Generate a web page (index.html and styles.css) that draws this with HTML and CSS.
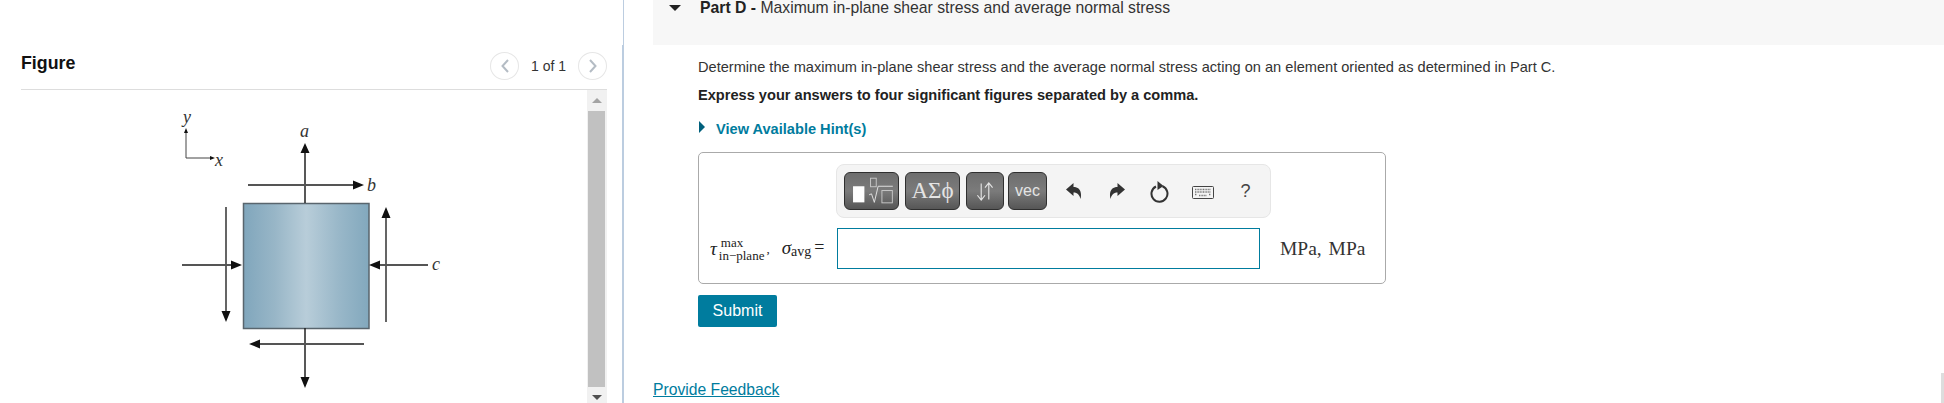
FILE: index.html
```html
<!DOCTYPE html>
<html lang="en">
<head>
<meta charset="utf-8">
<title>Part D</title>
<link rel="stylesheet" href="styles.css">
</head>
<body>
<div class="page">
  <aside class="figure-pane">
    <header class="figure-head">
      <h2 class="figure-title">Figure</h2>
      <div class="pager">
        <button class="pager-btn" type="button" aria-label="Previous"><svg viewBox="0 0 10 16" class="chev"><path d="M8 2 2.5 8 8 14"/></svg></button>
        <span class="pager-text">1 of 1</span>
        <button class="pager-btn" type="button" aria-label="Next"><svg viewBox="0 0 10 16" class="chev"><path d="M2 2 7.5 8 2 14"/></svg></button>
      </div>
    </header>
    <div class="figure-body">
      <svg class="diagram" viewBox="21 90 566 313" aria-label="Stress element">
        <defs>
          <linearGradient id="steel" x1="0" x2="1" y1="0" y2="0">
            <stop offset="0" stop-color="#80a6bc"/>
            <stop offset="0.25" stop-color="#98b6c7"/>
            <stop offset="0.5" stop-color="#b8cdd9"/>
            <stop offset="0.75" stop-color="#9ab8c9"/>
            <stop offset="1" stop-color="#82a8bd"/>
          </linearGradient>
        </defs>
        <rect class="element" x="243.5" y="203.5" width="125.5" height="125"/>
        <path class="axis" d="M186 132V158H211"/>
        <path class="head" d="M186 128l-2 5h4zM215 158l-5-2v4z"/>
        <path class="line dark" d="M305 203V150M305 328V380"/>
        <path class="line" d="M248 185H354M226 207V313M386 322V216M182 265H233M428 265H378M364 344H259"/>
        <path class="head" d="M305 143l-4.500 10h9zM364 185l-11-4.500v9zM226 322l-4.500-11h9zM386 207l-4.500 11h9zM242 265l-11-4.500v9zM369 265l11-4.500v9zM249 344l11-4.500v9zM305 388l-4.500-11h9z"/>
        <text class="label" x="300" y="137">a</text>
        <text class="label" x="367" y="191">b</text>
        <text class="label" x="432" y="270">c</text>
        <text class="label" x="183" y="123">y</text>
        <text class="label" x="215" y="166">x</text>
      </svg>
      <div class="scrollbar">
        <span class="scroll-btn"><i class="tri-up"></i></span>
        <span class="scroll-thumb"></span>
        <span class="scroll-btn"><i class="tri-down"></i></span>
      </div>
    </div>
  </aside>

  <div class="split"><span class="split-top"></span><span class="split-bottom"></span></div>

  <main class="part">
    <div class="part-head">
      <i class="part-caret"></i>
      <p class="part-title"><b>Part D - </b>Maximum in-plane shear stress and average normal stress</p>
    </div>
    <div class="part-body">
      <p class="prompt">Determine the maximum in-plane shear stress and the average normal stress acting on an element oriented as determined in Part C.</p>
      <p class="prompt strong">Express your answers to four significant figures separated by a comma.</p>
      <a class="hint" href="#"><i class="hint-caret"></i>View Available Hint(s)</a>
      <div class="answer">
        <div class="toolbar">
          <button class="tb-btn w55" type="button" aria-label="Templates">
            <svg viewBox="0 0 55 38" class="tb-svg">
              <rect class="t-fill" x="8" y="14" width="12" height="17"/>
              <rect class="t-box" x="26.500" y="5.500" width="6" height="9"/>
              <path class="t-root" d="M25 23l2.500-1 3 9 4-17H50"/>
              <rect class="t-box" x="38.500" y="18.500" width="11" height="13"/>
            </svg>
          </button>
          <button class="tb-btn w55 greek" type="button">ΑΣϕ</button>
          <button class="tb-btn w38" type="button" aria-label="Subscript superscript">
            <svg viewBox="0 0 38 38" class="tb-svg"><path class="t-arrow" d="M15 11V28M11 23.500l4 5 4-5M23 28V11M19 15.500l4-5 4 5"/></svg>
          </button>
          <button class="tb-btn w39 vec" type="button">vec</button>
          <div class="tools">
            <span class="tool"><svg viewBox="0 0 16 16" class="tool-svg"><path d="M0 6.500 7.500 0v4c5 0 9 3.500 7 12-1-4-3-6.500-7-6.500v3.500z"/></svg></span>
            <span class="tool"><svg viewBox="0 0 16 16" class="tool-svg"><path d="M16 6.500 8.500 0v4c-5 0-9 3.500-7 12 1-4 3-6.500 7-6.500v3.500z"/></svg></span>
            <span class="tool"><svg viewBox="0 0 20 22" class="tool-svg reset"><path class="ring" d="M12.500 5.300A8 8 0 1 1 6 5.500"/><path d="M7.500 0 13.500 5 7.500 9z"/></svg></span>
            <span class="tool"><svg viewBox="0 0 22 13" class="tool-svg keys"><rect class="kb" x="0.500" y="0.500" width="21" height="12" rx="1"/><path class="kb-keys" d="M3 3.500H19M3 6H19M3 8.500H5M7 9.500H15M17 8.500H19"/></svg></span>
            <span class="tool help">?</span>
          </div>
        </div>
        <div class="answer-row">
          <div class="math">
            <i class="mi">τ</i>
            <span class="stack"><span class="sup">max</span><span class="sub">in−plane</span></span>
            <span class="comma">,</span>
            <i class="mi sigma">σ</i><span class="avg">avg</span>
            <span class="eq">=</span>
          </div>
          <input class="answer-input" type="text" aria-label="Answer">
          <span class="units">MPa, MPa</span>
        </div>
      </div>
      <button class="submit" type="button">Submit</button>
    </div>
    <a class="feedback" href="#">Provide Feedback</a>
  </main>
  <span class="page-scroll"></span>
</div>
</body>
</html>
```

FILE: styles.css
```css
* { box-sizing: border-box; }
html, body { margin: 0; height: 403px; overflow: hidden; background: #fff; }
body { font-family: "Liberation Sans", Arial, sans-serif; color: #222; }
p, h2 { margin: 0; }
.page { position: relative; display: flex; height: 403px; overflow: hidden; }

/* left pane */
.figure-pane { width: 622px; flex: none; padding: 0 15px 0 21px; }
.figure-head { height: 90px; padding: 52px 0 9px; display: flex; justify-content: space-between; border-bottom: 1px solid #ddd; }
.figure-title { font-size: 17.800px; line-height: 22px; font-weight: 700; color: #111; }
.pager { display: flex; align-items: center; }
.pager-btn { width: 29px; height: 28px; padding: 0; display: flex; align-items: center; justify-content: center; background: #fff; border: 1px solid #e6e6e6; border-radius: 50%; }
.chev { width: 10px; height: 16px; fill: none; stroke: #b4bcc4; stroke-width: 2; }
.pager-text { width: 59px; text-align: center; font-size: 14px; color: #333; }
.figure-body { display: flex; height: 313px; }
.diagram { flex: 1; min-width: 0; height: 313px; display: block; }
.element { fill: url(#steel); stroke: #59656d; stroke-width: 1.5; }
.axis { fill: none; stroke: #444; stroke-width: 1; }
.line { fill: none; stroke: #555; stroke-width: 1.8; }
.line.dark { stroke: #222; stroke-width: 1.5; }
.head { fill: #111; }
.label { font-family: "Liberation Serif", serif; font-style: italic; font-size: 18px; fill: #333; }
.scrollbar { width: 20px; flex: none; display: flex; flex-direction: column; background: #f1f1f1; padding: 0 2px 0 1px; }
.scroll-btn { height: 21px; flex: none; display: flex; align-items: center; justify-content: center; }
.scroll-thumb { flex: none; height: 276px; background: #c1c1c1; }
.tri-up { width: 0; height: 0; border: 5px solid transparent; border-top: 0; border-bottom: 5px solid #a3a3a3; }
.tri-down { width: 0; height: 0; border: 5px solid transparent; border-bottom: 0; border-top: 5px solid #505050; }

.split { width: 2px; flex: none; display: flex; flex-direction: column; align-items: flex-end; }
.split-top { width: 1px; height: 45px; background: #bccde0; }
.split-bottom { width: 2px; flex: 1; background: #bccde0; }

/* right pane */
.part { flex: 1; min-width: 0; padding-left: 29px; }
.part-head { height: 45px; background: #f7f7f7; display: flex; padding-left: 16px; }
.part-caret { width: 0; height: 0; margin-top: 5px; border-style: solid; border-width: 6px 6px 0; border-color: #222 transparent transparent; }
.part-title { margin-left: 19px; font-size: 15.750px; line-height: 16px; color: #333; }
.part-title b { color: #222; }
.part-body { padding-left: 45px; }
.prompt { font-size: 14.600px; line-height: 20px; margin-top: 12px; color: #333; }
.prompt.strong { margin-top: 8px; font-weight: 700; color: #222; }
.hint { display: flex; align-items: center; margin-top: 14px; height: 20px; font-size: 14.600px; font-weight: 700; color: #007c9e; text-decoration: none; }
.hint-caret { width: 0; height: 0; margin: 0 11px 4px 1px; border-style: solid; border-width: 6px 0 6px 6px; border-color: transparent transparent transparent #00607c; }
.answer { width: 688px; height: 132px; margin-top: 13px; border: 1px solid #aaa; border-radius: 5px; padding: 11px 0 0 137px; }
.toolbar { width: 435px; height: 54px; display: flex; align-items: center; padding-left: 7px; gap: 6px; background: #f4f4f4; border: 1px solid #e6e6e6; border-radius: 8px; }
.tb-btn { height: 38px; padding: 0; flex: none; border: 1px solid #2f2f2f; border-radius: 6px; background: linear-gradient(#6e6e6e, #7b7b7b 50%, #565656); color: #e4e4e4; }
.w55 { width: 55px; }
.w38 { width: 38px; }
.w39 { width: 39px; margin-left: -2px; }
.greek { font-family: "Liberation Serif", serif; font-size: 23px; }
.vec { font-size: 16px; }
.tb-svg { display: block; width: 100%; height: 100%; }
.t-fill { fill: #fff; }
.t-box { fill: none; stroke: #c8c8c8; stroke-width: 1; }
.t-root { fill: none; stroke: #e4e4e4; stroke-width: 1; }
.t-arrow { fill: none; stroke: #e4e4e4; stroke-width: 1.200; }
.tools { display: flex; margin-left: -1px; }
.tool { width: 43px; display: flex; justify-content: center; align-items: center; color: #444; }
.tool-svg { width: 16px; height: 16px; fill: #333; }
.tool-svg.reset { width: 20px; height: 22px; margin-top: 1px; }
.ring { fill: none; stroke: #333; stroke-width: 2; }
.tool-svg.keys { width: 22px; height: 13px; margin-top: 3px; }
.kb { fill: #f4f4f4; stroke: #444; stroke-width: 1; }
.kb-keys { fill: none; stroke: #777; stroke-width: 1.400; stroke-dasharray: 1 .6; }
.help { font-size: 18px; }
.answer-row { display: flex; align-items: center; margin: 10px 0 0 -137px; padding-left: 11px; }
.math { width: 127px; flex: none; display: flex; align-items: center; font-family: "Liberation Serif", serif; color: #222; white-space: nowrap; }
.mi { font-size: 19px; }
.stack { display: flex; flex-direction: column; align-items: flex-start; font-size: 13px; line-height: 13px; margin-left: 2px; }
.sup { padding-left: 2px; }
.comma { font-size: 13px; margin: 0 12px 0 2px; }
.sigma { margin-top: -2px; }
.avg { font-size: 14px; margin-top: 6px; }
.eq { font-size: 18px; margin-left: 3px; margin-top: -2px; }
.answer-input { width: 423px; height: 41px; flex: none; border: 1px solid #007c9e; background: #fff; padding: 0; outline: 0; }
.units { margin-left: 20px; font-family: "Liberation Serif", serif; font-size: 19.500px; color: #333; white-space: nowrap; word-spacing: 2px; }
.submit { display: block; width: 79px; height: 32px; margin-top: 11px; padding: 0; border: 0; border-radius: 2px; background: #007c9e; color: #fff; font: 16px "Liberation Sans", Arial, sans-serif; }
.feedback { display: block; margin-top: 54px; font-size: 15.700px; line-height: 18px; color: #007c9e; text-decoration: underline; }
.page-scroll { position: absolute; right: 0; top: 373px; width: 3px; height: 30px; background: #ddd; }
```
